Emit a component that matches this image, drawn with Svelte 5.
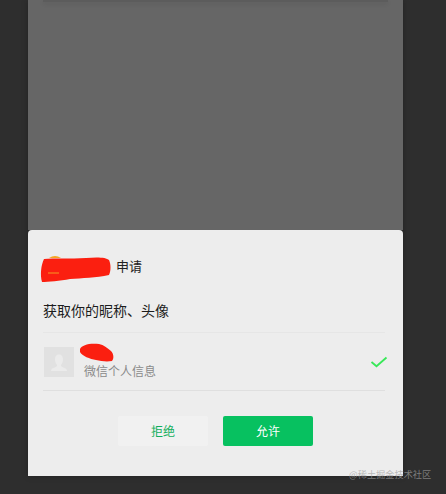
<script>
  const title = '申请';
  const scope = '获取你的昵称、头像';
</script>

<div class="page">
  <div class="phone">
    <div class="backdrop">
      <div class="strip"></div>
    </div>
    <div class="sheet">
      <div class="head">
        <div class="app-name">
          <svg class="scribble" width="72" height="30" viewBox="0 0 72 30" aria-hidden="true">
            <path d="M9 5 Q15 1 21 5 Z" fill="#f5a623" />
            <path d="M4 6 C14 5 30 6 46 5 C56 4 66 4 69 7 C71 11 71 18 69 22 C56 25 42 25 30 26 C20 28 8 29 2 29 C0 22 1 12 4 6 Z" fill="#fb1f10" />
            <path d="M8 20 H19" stroke="#f59a23" stroke-width="1" />
          </svg>
        </div>
        <span class="title">{title}</span>
      </div>
      <p class="scope">{scope}</p>
      <div class="info">
        <div class="avatar">
          <svg width="30" height="30" viewBox="0 0 30 30" aria-hidden="true">
            <path d="M15 7.5 C12 7.5 11 10 11 12.5 C11 15 12.2 17 13 18 C13 19.5 12 20 10 20.8 C8.5 21.4 7 22 7 24 H23 C23 22 21.5 21.4 20 20.8 C18 20 17 19.5 17 18 C17.8 17 19 15 19 12.5 C19 10 18 7.5 15 7.5 Z" fill="#ebebeb" />
          </svg>
        </div>
        <div class="texts">
          <svg class="nick" width="36" height="20" viewBox="0 0 36 20" aria-hidden="true">
            <path d="M1 6 C3 2 10 0 20 1 C25 2 28 5 32 8 C35 11 35 16 33 18 C27 19 22 18 17 17 C11 16 3 13 1 9 Z" fill="#fb1f10" />
          </svg>
          <span class="desc">微信个人信息</span>
        </div>
        <svg class="check" width="18" height="12" viewBox="0 0 18 12" aria-hidden="true">
          <path d="M1.5 6 L6.5 10.2 L16.5 1.5" fill="none" stroke="#38e858" stroke-width="1.8" />
        </svg>
      </div>
      <div class="actions">
        <button class="reject" type="button">拒绝</button>
        <button class="allow" type="button">允许</button>
      </div>
    </div>
  </div>
  <span class="watermark">@稀土掘金技术社区</span>
</div>

<style>
  :global(body) {
    margin: 0;
    background: #2e2e2e;
  }

  .page {
    position: relative;
    width: 446px;
    height: 494px;
    overflow: hidden;
    background: #2e2e2e;
    font-family: "Noto Sans CJK SC", "Liberation Sans", sans-serif;
  }

  .phone {
    width: 375px;
    margin-left: 28px;
    display: flex;
    flex-direction: column;
    box-shadow: 0 0 6px rgba(0, 0, 0, 0.25);
  }

  .backdrop {
    height: 230px;
    background: #666666;
    padding: 0 15px;
    box-sizing: border-box;
  }

  .strip {
    height: 2px;
    background: #5c5c5c;
    box-shadow: 0 2px 4px rgba(0, 0, 0, 0.12);
  }

  .sheet {
    height: 246px;
    box-sizing: border-box;
    background: #ededed;
    border-radius: 4px 4px 0 0;
    padding: 0 18px 0 15px;
    display: flex;
    flex-direction: column;
  }

  .head {
    display: flex;
    align-items: center;
    height: 28px;
    margin-top: 23px;
    gap: 1px;
  }

  .app-name {
    width: 72px;
    height: 28px;
    margin-left: -3px;
    flex: none;
  }

  .scribble {
    display: block;
    overflow: visible;
  }

  .nick {
    display: block;
  }

  .title {
    font-size: 13px;
    color: #222;
    margin-top: -3px;
    margin-left: 3px;
  }

  .scope {
    margin: 19px 0 0;
    height: 32px;
    font-size: 14px;
    line-height: 20px;
    color: #1c1c1c;
    border-bottom: 1px solid #e6e6e6;
    box-sizing: content-box;
  }

  .info {
    display: flex;
    align-items: center;
    height: 57px;
    border-bottom: 1px solid #dfdfdf;
    position: relative;
  }

  .avatar {
    width: 30px;
    height: 30px;
    flex: none;
    margin-left: 1px;
    background: #e1e1e1;
  }

  .avatar svg {
    display: block;
  }

  .texts {
    margin-left: 10px;
    flex: 1;
    display: flex;
    flex-direction: column;
    height: 38px;
  }

  .nick {
    margin-left: -5px;
    margin-top: 0;
    height: 20px;
  }

  .desc {
    font-size: 12px;
    line-height: 16px;
    margin-top: 0;
    color: #8a8a8a;
  }

  .check {
    flex: none;
    margin-top: 1px;
    margin-right: -3px;
  }

  .actions {
    display: flex;
    justify-content: center;
    gap: 15px;
    margin-top: 25px;
    padding-left: 3px;
  }

  .actions button {
    width: 90px;
    height: 30px;
    border: 0;
    padding: 0 0 2px;
    border-radius: 2px;
    font-family: inherit;
    font-size: 12px;
  }

  .reject {
    background: #f1f1f1;
    color: #10ae5c;
  }

  .allow {
    background: #07c160;
    color: #fff;
  }

  .watermark {
    position: absolute;
    left: 349px;
    top: 467px;
    font-size: 9.2px;
    line-height: 14px;
    color: rgba(160, 160, 160, 0.7);
    white-space: nowrap;
  }
</style>
